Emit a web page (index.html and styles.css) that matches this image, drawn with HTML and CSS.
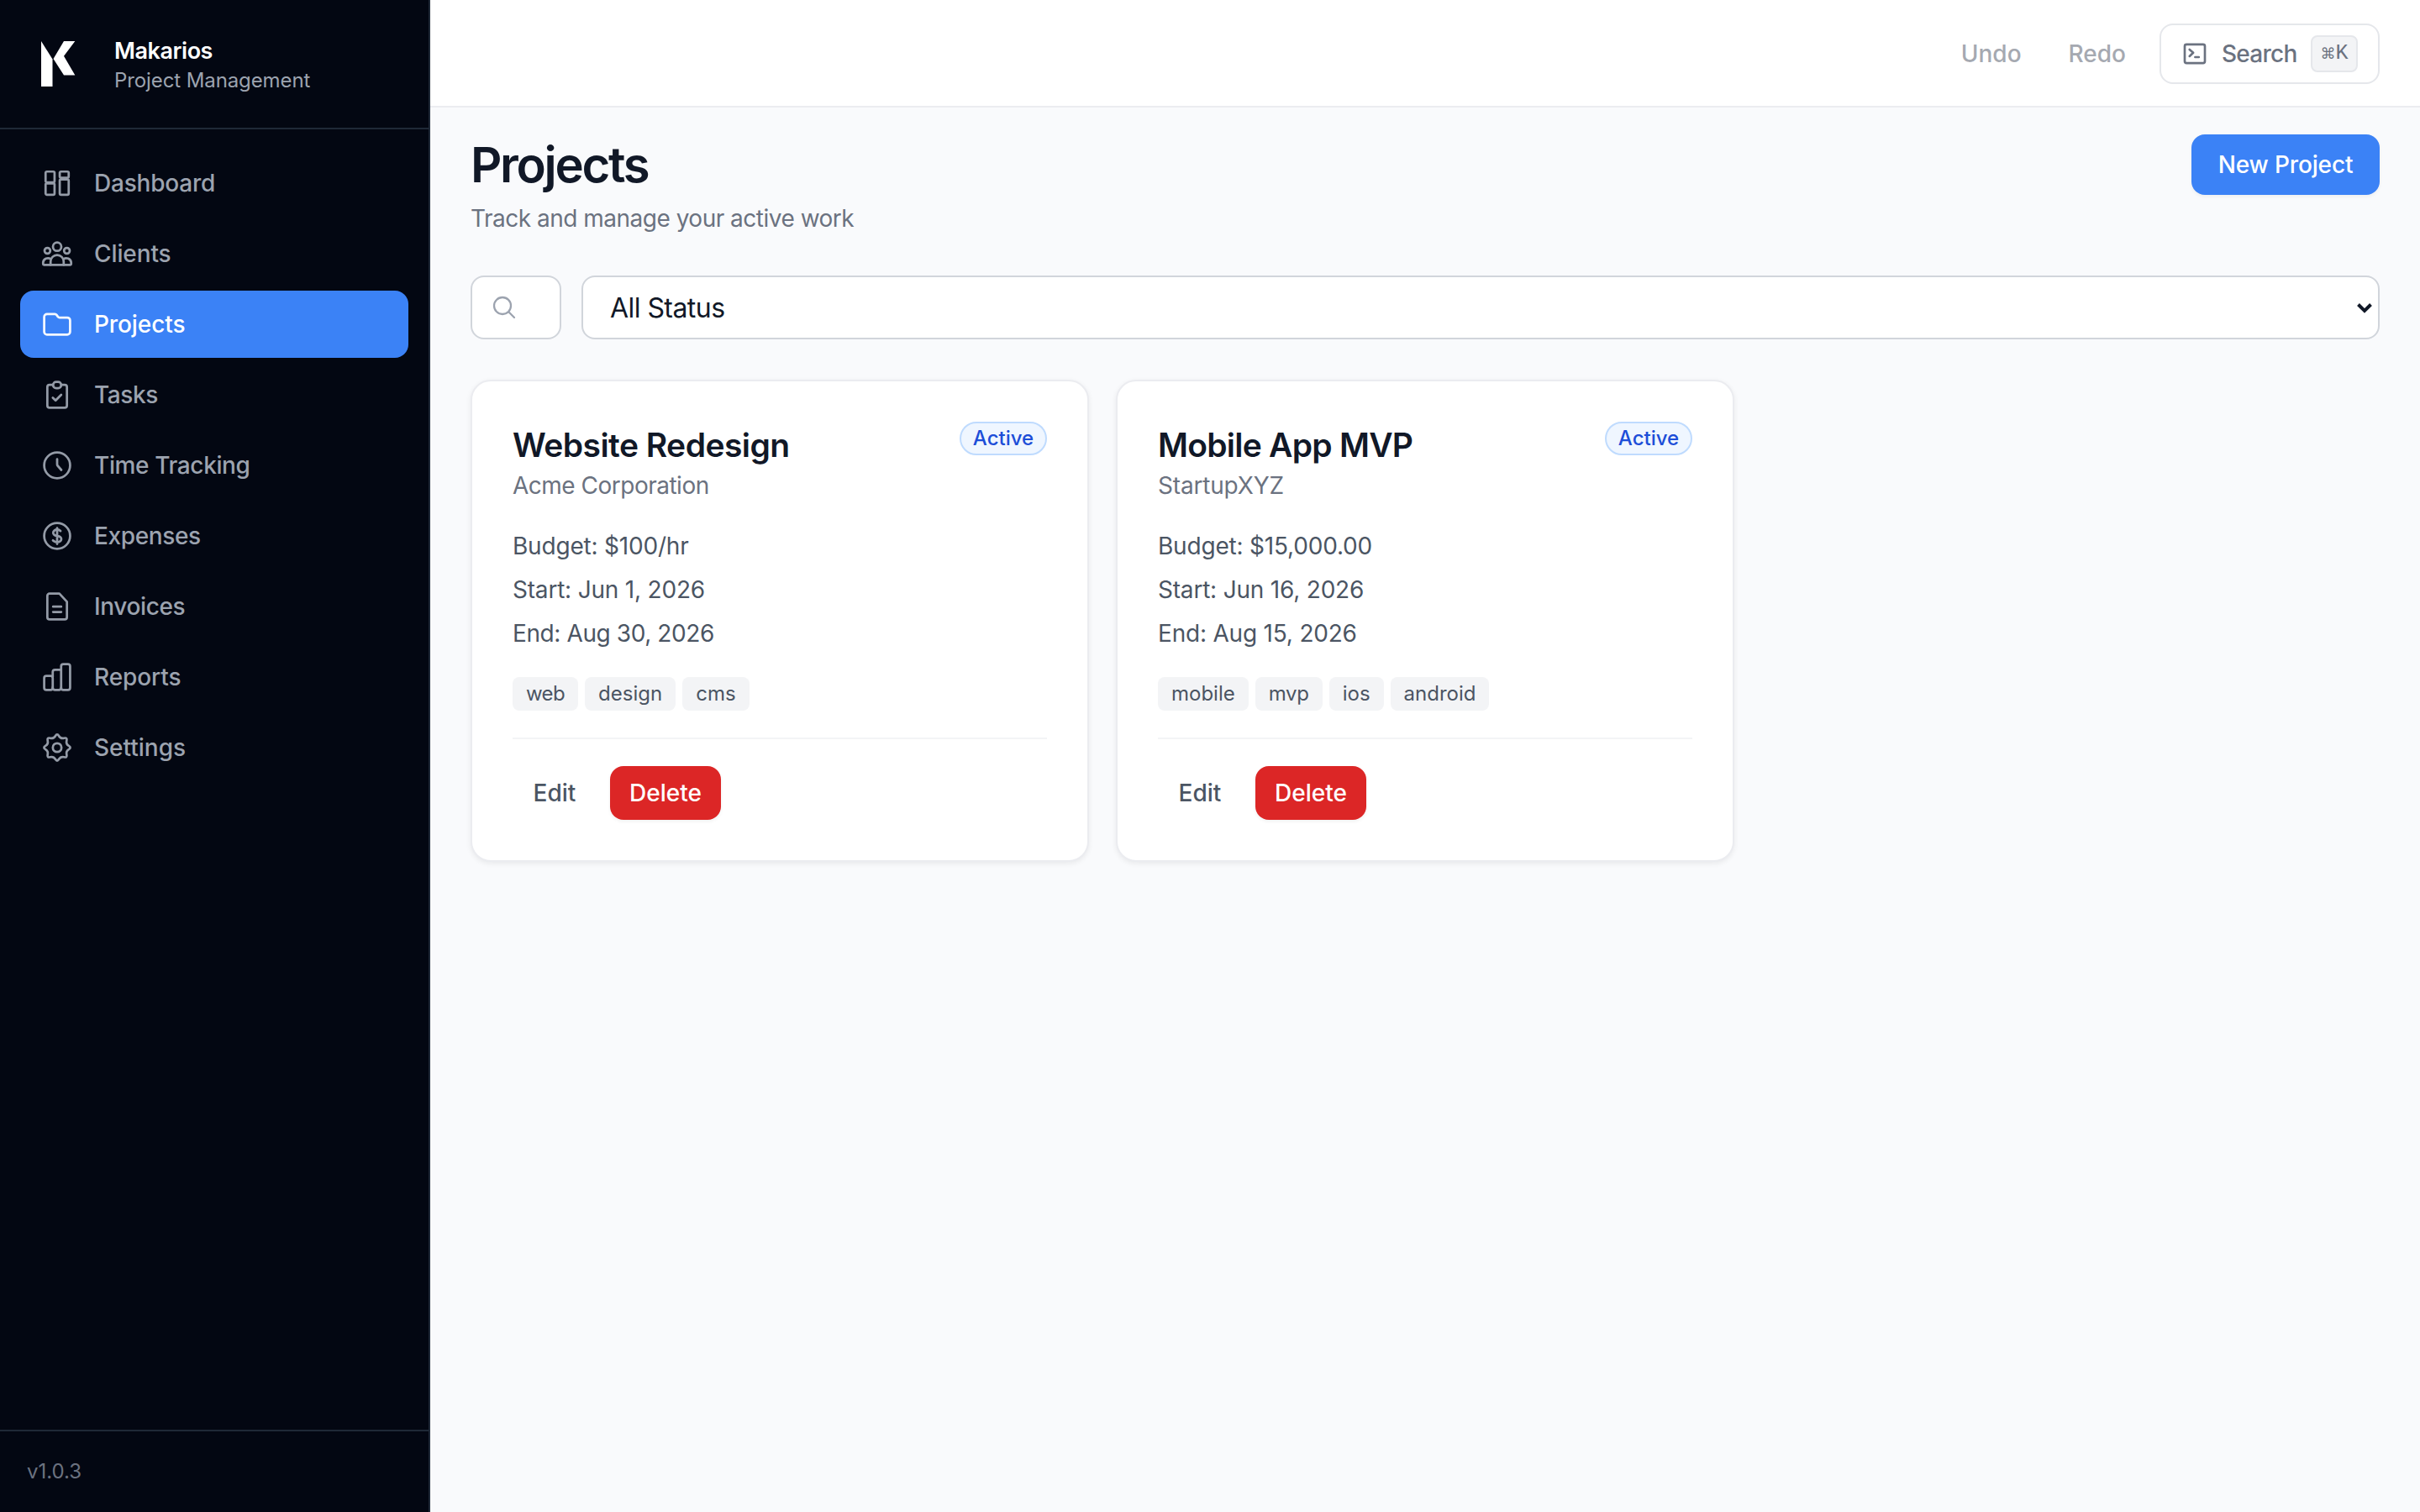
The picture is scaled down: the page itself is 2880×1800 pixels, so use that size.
FILE: index.html
```html
<!DOCTYPE html>
<html lang="en">
<head>
    <meta charset="UTF-8">
    <meta name="viewport" content="width=device-width, initial-scale=1.0">
    <title>Makarios - Projects</title>
    <link rel="stylesheet" href="styles.css">
</head>
<body>
    <div class="app">
        <aside class="sidebar">
            <div class="brand">
                <svg class="brand-logo" viewBox="0 0 72 72">
                    <path d="M17 9L30.5 30.5V63H17Z"/>
                    <path d="M44 9H57.3L44 26.8L57.3 49.6H44L31.5 30Z"/>
                </svg>
                <div>
                    <div class="brand-name">Makarios</div>
                    <div class="brand-sub">Project Management</div>
                </div>
            </div>

            <nav class="nav">
                <a class="nav-item">
                    <svg class="icon" viewBox="0 0 24 24">
                        <rect x="3.75" y="3.75" width="6.4" height="7.7" rx="0.9"/>
                        <rect x="3.75" y="12.2" width="6.4" height="8.1" rx="0.9"/>
                        <rect x="13.85" y="3.75" width="6.4" height="4.4" rx="0.9"/>
                        <rect x="13.85" y="9.3" width="6.4" height="11" rx="0.9"/>
                    </svg>
                    <span class="ls-dashboard">Dashboard</span>
                </a>
                <a class="nav-item">
                    <svg class="icon icon-clients" viewBox="0 0 40 40">
                        <circle cx="20" cy="11.7" r="5"/>
                        <circle cx="8.4" cy="16.5" r="3.4"/>
                        <circle cx="31.6" cy="16.5" r="3.4"/>
                        <path d="M12.2 33.3V29.4a7.8 7.8 0 0 1 15.6 0V33.3"/>
                        <path d="M12.4 26.4A5.8 5.8 0 0 0 3.3 30.5V32.3a1 1 0 0 0 1 1H35.7a1 1 0 0 0 1 -1V30.5A5.8 5.8 0 0 0 27.6 26.4"/>
                    </svg>
                    <span>Clients</span>
                </a>
                <a class="nav-item active">
                    <svg class="icon" viewBox="0 0 24 24">
                        <path d="M2.75 6.75a2 2 0 0 1 2-2H10.4a1.5 1.5 0 0 1 1.2.6L12.6 6.7a1.5 1.5 0 0 0 1.2.55H19.25a2 2 0 0 1 2 2V17.4a2 2 0 0 1-2 2H4.75a2 2 0 0 1-2-2Z"/>
                    </svg>
                    <span>Projects</span>
                </a>
                <a class="nav-item">
                    <svg class="icon" viewBox="0 0 24 24">
                        <path d="M9 4.9H6.6A1.6 1.6 0 0 0 5 6.5V19.6a1.6 1.6 0 0 0 1.6 1.6H17.4A1.6 1.6 0 0 0 19 19.6V6.5A1.6 1.6 0 0 0 17.4 4.9H15"/>
                        <rect x="9.1" y="2.75" width="5.8" height="4.5" rx="2.2"/>
                        <path d="M8.9 14.1L10.9 16.1L14.9 12"/>
                    </svg>
                    <span class="ls-wide">Tasks</span>
                </a>
                <a class="nav-item">
                    <svg class="icon" viewBox="0 0 24 24">
                        <circle cx="12" cy="12" r="9.25"/>
                        <path d="M12 7.5V11.2a1.6 1.6 0 0 0 .4 1.1L15 15.3"/>
                    </svg>
                    <span class="ls-wide">Time Tracking</span>
                </a>
                <a class="nav-item">
                    <svg class="icon" viewBox="0 0 24 24">
                        <circle cx="12" cy="12" r="9.25"/>
                        <path d="M12 6.3V17.7M9 15.182l.879.659c1.171.879 3.07.879 4.242 0 1.172-.879 1.172-2.303 0-3.182C13.536 12.219 12.768 12 12 12c-.725 0-1.45-.22-2.003-.659-1.106-.879-1.106-2.303 0-3.182s2.9-.879 4.006 0l.415.33"/>
                    </svg>
                    <span class="ls-wide">Expenses</span>
                </a>
                <a class="nav-item">
                    <svg class="icon" viewBox="0 0 24 24">
                        <path d="M13.6 2.75H6.6A1.6 1.6 0 0 0 5 4.35V19.65a1.6 1.6 0 0 0 1.6 1.6H17.4A1.6 1.6 0 0 0 19 19.65V8.6Z"/>
                        <path d="M9.1 12.1H14.9M9.1 15.9H14.9"/>
                    </svg>
                    <span class="ls-wide">Invoices</span>
                </a>
                <a class="nav-item">
                    <svg class="icon" viewBox="0 0 24 24">
                        <rect x="2.75" y="11.1" width="6.1" height="10.15" rx="1.6"/>
                        <path d="M8.85 12V8.4A1.6 1.6 0 0 1 10.45 6.8H14.7M8.85 19.5A1.6 1.6 0 0 0 10.45 21.25H13.25A1.6 1.6 0 0 0 14.85 19.5"/>
                        <rect x="14.85" y="2.75" width="6.4" height="18.5" rx="1.6"/>
                    </svg>
                    <span>Reports</span>
                </a>
                <a class="nav-item">
                    <svg class="icon" viewBox="-12 -12 24 24">
                        <path d="M-1.28 -8.3Q0 -10.4 1.28 -8.3Q2.56 -6.19 4.96 -6.77Q7.35 -7.35 6.77 -4.96Q6.19 -2.56 8.3 -1.28Q10.4 0 8.3 1.28Q6.19 2.56 6.77 4.96Q7.35 7.35 4.96 6.77Q2.56 6.19 1.28 8.3Q0 10.4 -1.28 8.3Q-2.56 6.19 -4.96 6.77Q-7.35 7.35 -6.77 4.96Q-6.19 2.56 -8.3 1.28Q-10.4 0 -8.3 -1.28Q-6.19 -2.56 -6.77 -4.96Q-7.35 -7.35 -4.96 -6.77Q-2.56 -6.19 -1.28 -8.3Z"/>
                        <circle cx="0" cy="0" r="3.1"/>
                    </svg>
                    <span class="ls-settings">Settings</span>
                </a>
            </nav>

            <div class="sidebar-footer">v1.0.3</div>
        </aside>

        <main class="main">
            <header class="topbar">
                <div class="history">
                    <button class="history-btn" disabled>Undo</button>
                    <button class="history-btn" disabled>Redo</button>
                </div>
                <button class="search-btn">
                    <svg class="icon-small" viewBox="0 0 24 24">
                        <rect x="3" y="3.7" width="18" height="16.6" rx="1.6"/>
                        <path d="M7.3 8.2L10.6 11.1L7.3 14.2M12.3 15H15.6"/>
                    </svg>
                    <span>Search</span>
                    <kbd><span class="cmd">⌘</span>K</kbd>
                </button>
            </header>

            <div class="content">
                <div class="page-header">
                    <div>
                        <h1>Projects</h1>
                        <p class="subtitle">Track and manage your active work</p>
                    </div>
                    <button class="btn-primary">New Project</button>
                </div>

                <!-- Filters -->
                <div class="filters">
                    <div class="search-field">
                        <input type="text" class="search-input" aria-label="Search projects">
                        <svg class="search-icon" viewBox="0 0 24 24">
                            <path d="M21 21L15.803 15.803M15.803 15.803A7.5 7.5 0 1 0 5.196 5.196A7.5 7.5 0 0 0 15.803 15.803Z"/>
                        </svg>
                    </div>
                    <div class="select-field">
                        <select class="status-select">
                            <option>All Status</option>
                        </select>
                        <svg class="chevron" viewBox="0 0 20 14">
                            <path d="M2.5 2.5L10 10L17.5 2.5"/>
                        </svg>
                    </div>
                </div>

                <!-- Project cards -->
                <div class="grid">
                    <div class="card">
                        <div class="card-header">
                            <div>
                                <h3>Website Redesign</h3>
                                <p class="client ls-client">Acme Corporation</p>
                            </div>
                            <span class="badge">Active</span>
                        </div>
                        <div class="details">
                            <div>Budget: $100/hr</div>
                            <div>Start: Jun 1, 2026</div>
                            <div class="ls-end">End: Aug 30, 2026</div>
                        </div>
                        <div class="tags">
                            <span class="tag tag-web">web</span>
                            <span class="tag">design</span>
                            <span class="tag">cms</span>
                        </div>
                        <div class="actions">
                            <button class="btn-ghost">Edit</button>
                            <button class="btn-danger">Delete</button>
                        </div>
                    </div>

                    <div class="card">
                        <div class="card-header">
                            <div>
                                <h3 class="ls-mobile">Mobile App MVP</h3>
                                <p class="client">StartupXYZ</p>
                            </div>
                            <span class="badge">Active</span>
                        </div>
                        <div class="details">
                            <div>Budget: $15,000.00</div>
                            <div>Start: Jun 16, 2026</div>
                            <div>End: Aug 15, 2026</div>
                        </div>
                        <div class="tags">
                            <span class="tag">mobile</span>
                            <span class="tag tag-mvp">mvp</span>
                            <span class="tag">ios</span>
                            <span class="tag">android</span>
                        </div>
                        <div class="actions">
                            <button class="btn-ghost">Edit</button>
                            <button class="btn-danger">Delete</button>
                        </div>
                    </div>
                </div>
            </div>
        </main>
    </div>
</body>
</html>
```
FILE: styles.css
```css
* {
    box-sizing: border-box;
    margin: 0;
    padding: 0;
}

body {
    font-family: Inter, "DejaVu Sans", sans-serif;
    font-size: 28px;
    line-height: 40px;
    background-color: #f9fafc;
    color: #111827;
}

button, input, select {
    font: inherit;
    letter-spacing: inherit;
}

.app {
    display: flex;
    height: 100vh;
}

/* Sidebar */
.sidebar {
    display: flex;
    flex-direction: column;
    flex-shrink: 0;
    width: 512px;
    background-color: #030712;
    border-right: 2px solid #1f2937;
}

.brand {
    display: flex;
    gap: 32px;
    padding: 40px 32px;
    border-bottom: 2px solid #1f2937;
}

.brand-logo {
    width: 72px;
    height: 72px;
    fill: #fff;
}

.brand-name {
    padding-top: 1px;
    color: #fff;
    font-size: 27px;
    font-weight: 600;
    line-height: 39px;
    letter-spacing: -0.45px;
}

.brand-sub {
    color: #9ca3af;
    font-size: 24px;
    line-height: 32px;
    letter-spacing: -0.1px;
}

.nav {
    display: flex;
    flex-direction: column;
    flex: 1;
    gap: 4px;
    padding: 24px;
}

.nav-item {
    display: flex;
    align-items: center;
    gap: 24px;
    height: 80px;
    padding: 0 24px;
    border-radius: 16px;
    color: #9ca3af;
    font-weight: 500;
    letter-spacing: -0.1px;
}

.nav-item.active {
    background-color: #3b82f6;
    color: #fff;
}

.ls-dashboard {
    letter-spacing: -0.2px;
}

.ls-wide {
    letter-spacing: -0.38px;
}

.ls-settings {
    letter-spacing: 0;
}

.icon {
    width: 40px;
    height: 40px;
    fill: none;
    stroke: currentColor;
    stroke-width: 1.65;
    stroke-linecap: round;
    stroke-linejoin: round;
    opacity: 0.95;
}

.icon-clients {
    stroke-width: 2.75;
}

.sidebar-footer {
    padding: 32px;
    border-top: 2px solid #1f2937;
    color: #6b7280;
    font-size: 24px;
    line-height: 32px;
    letter-spacing: 0;
}

/* Top bar */
.main {
    flex: 1;
    min-width: 0;
}

.topbar {
    display: flex;
    justify-content: flex-end;
    gap: 16px;
    height: 128px;
    padding: 28px 48px 26px;
    background-color: #fff;
    border-bottom: 2px solid #ebecf0;
}

.history {
    display: flex;
    gap: 8px;
}

.history-btn {
    height: 72px;
    padding: 0 24px;
    border: none;
    background: none;
    color: #a5a9b1;
    font-weight: 500;
}

.search-btn {
    display: flex;
    align-items: center;
    gap: 16px;
    width: 262px;
    height: 72px;
    padding: 0 24px;
    border: 2px solid #e5e7eb;
    border-radius: 16px;
    background-color: #fff;
    color: #6b7280;
    font-weight: 500;
    letter-spacing: -0.75px;
}

.icon-small {
    width: 32px;
    height: 32px;
    fill: none;
    stroke: currentColor;
    stroke-width: 2;
    stroke-linecap: round;
    stroke-linejoin: round;
}

kbd {
    display: flex;
    align-items: center;
    justify-content: center;
    width: 56px;
    height: 44px;
    margin-left: auto;
    border: 2px solid #e5e7eb;
    border-radius: 8px;
    background-color: #f3f4f6;
    font-family: "Liberation Mono", monospace;
    font-size: 25px;
    font-weight: 400;
    letter-spacing: 0;
}

.cmd {
    font-family: "DejaVu Sans", sans-serif;
    font-size: 18px;
}

/* Page header */
.content {
    padding: 32px 48px;
}

.page-header {
    display: flex;
    justify-content: space-between;
    align-items: flex-start;
    margin-bottom: 48px;
}

h1 {
    padding-top: 1px;
    font-size: 58px;
    font-weight: 600;
    line-height: 71px;
    letter-spacing: -2.3px;
}

.subtitle {
    margin-top: 8px;
    color: #6b7280;
    letter-spacing: -0.5px;
}

.btn-primary {
    width: 224px;
    height: 72px;
    border: none;
    border-radius: 16px;
    background-color: #3b82f6;
    box-shadow: 0 2px 4px rgba(0, 0, 0, 0.05);
    color: #fff;
    font-weight: 500;
    letter-spacing: -0.14px;
}

/* Filters */
.filters {
    display: flex;
    gap: 24px;
    margin-bottom: 48px;
}

.search-field {
    position: relative;
    width: 108px;
}

.select-field {
    position: relative;
    flex: 1;
}

.search-input,
.status-select {
    display: block;
    width: 100%;
    height: 76px;
    border: 2px solid #d1d5db;
    border-radius: 16px;
    background-color: #fff;
    outline: none;
}

.status-select {
    appearance: none;
    padding: 1px 32px 0;
    color: #111827;
    font-size: 32px;
    letter-spacing: -0.55px;
}

.search-icon {
    position: absolute;
    left: 24px;
    top: 22px;
    width: 32px;
    height: 32px;
    fill: none;
    stroke: #9ca3af;
    stroke-width: 1.7;
    stroke-linecap: round;
}

.chevron {
    position: absolute;
    right: 8px;
    top: 32px;
    width: 20px;
    height: 14px;
    fill: none;
    stroke: #111827;
    stroke-width: 4;
}

/* Cards */
.grid {
    display: grid;
    grid-template-columns: repeat(3, 1fr);
    gap: 32px;
}

.card {
    padding: 48px;
    border: 2px solid #ebecf0;
    border-radius: 24px;
    background-color: #fff;
    box-shadow: 0 2px 6px rgba(0, 0, 0, 0.07);
}

.card-header {
    display: flex;
    justify-content: space-between;
    align-items: flex-start;
    margin-bottom: 32px;
}

h3 {
    font-size: 39px;
    font-weight: 600;
    line-height: 56px;
    letter-spacing: -0.55px;
}

.ls-mobile {
    letter-spacing: -0.75px;
}

.client {
    color: #6b7280;
    letter-spacing: -0.18px;
}

.ls-client {
    letter-spacing: -0.5px;
}

.badge {
    width: 104px;
    height: 40px;
    border: 2px solid #bfdbfe;
    border-radius: 20px;
    background-color: #eff6ff;
    color: #1d4ed8;
    font-size: 24px;
    font-weight: 500;
    line-height: 36px;
    text-align: center;
}

.details {
    display: flex;
    flex-direction: column;
    gap: 12px;
    color: #4b5563;
    letter-spacing: -0.2px;
}

.ls-end {
    letter-spacing: -0.4px;
}

.tags {
    display: flex;
    gap: 8px;
    margin: 32px 0;
}

.tag {
    padding: 0 16px;
    border-radius: 8px;
    background-color: #f3f4f6;
    color: #4b5563;
    font-size: 24px;
    letter-spacing: 0;
}

.tag-web {
    letter-spacing: -0.6px;
}

.tag-mvp {
    letter-spacing: -0.3px;
}

.actions {
    display: flex;
    gap: 16px;
    padding-top: 32px;
    border-top: 2px solid #f3f4f6;
}

.btn-ghost,
.btn-danger {
    height: 64px;
    border: none;
    border-radius: 16px;
    font-weight: 500;
}

.btn-ghost {
    width: 100px;
    background: none;
    color: #4b5563;
}

.btn-danger {
    width: 132px;
    background-color: #dc2626;
    box-shadow: 0 2px 4px rgba(0, 0, 0, 0.06);
    color: #fff;
}
```
